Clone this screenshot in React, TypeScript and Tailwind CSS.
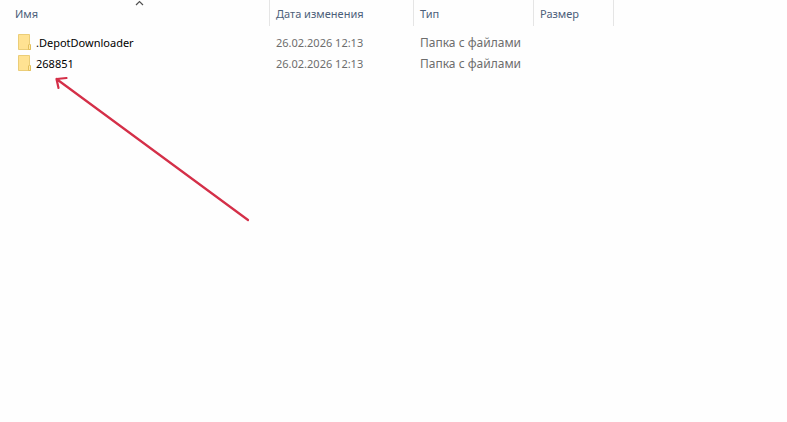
import { useState } from 'react'

interface FileEntry {
  name: string
  modified: string
  type: string
  size: string
}

const files: FileEntry[] = [
  { name: '.DepotDownloader', modified: '26.02.2026 12:13', type: 'Папка с файлами', size: '' },
  { name: '268851', modified: '26.02.2026 12:13', type: 'Папка с файлами', size: '' },
]

function FolderIcon() {
  return (
    <svg width="14" height="17" viewBox="0 0 14 17" className="shrink-0" aria-hidden="true">
      <path d="M0.5 0.5H11.5V10L12.5 11V15.5H0.5Z" fill="#ffe292" stroke="#ebcd78" />
      <path d="M10.5 15.5V11L11.5 10L12.5 11V15.5Z" fill="#ffe9a6" stroke="#e3bf5c" />
    </svg>
  )
}

function SortIcon({ ascending }: { ascending: boolean }) {
  return (
    <svg
      width="9"
      height="6"
      viewBox="0 0 9 6"
      className={`absolute top-0 left-1/2 ${ascending ? '' : 'rotate-180'}`}
      aria-hidden="true"
    >
      <path d="M1 5L4.5 1.5L8 5" fill="none" stroke="#505050" strokeWidth="1.2" />
    </svg>
  )
}

function PointerArrow() {
  return (
    <svg
      width="200"
      height="150"
      viewBox="0 0 200 150"
      className="absolute left-[52px] top-[74px] pointer-events-none"
      aria-hidden="true"
    >
      <path
        d="M196 146L4.5 5M14.5 4L4.5 5L6.5 14"
        fill="none"
        stroke="#d42f48"
        strokeWidth="2.2"
        strokeLinecap="round"
        strokeLinejoin="round"
      />
    </svg>
  )
}

const headerCell = 'h-[26px] p-0 pl-1.5 pt-0.5 text-left font-normal border-r border-[#e5e5e5]'

export default function App() {
  const [ascending, setAscending] = useState(true)
  const sorted = ascending ? files : [...files].reverse()

  return (
    <main className="relative min-h-screen bg-[#fefefe] font-['Noto_Sans','Open_Sans',sans-serif] text-[11px]">
      <table className="w-full table-fixed border-separate border-spacing-0">
        <colgroup>
          <col className="w-[270px]" />
          <col className="w-36" />
          <col className="w-[120px]" />
          <col className="w-20" />
          <col />
        </colgroup>
        <thead className="text-[#4c607a]">
          <tr>
            <th className="relative h-[26px] p-0 pt-0.5 text-left font-normal border-r border-[#e5e5e5]">
              <button
                type="button"
                onClick={() => setAscending(!ascending)}
                className="w-full pl-[15px] text-left"
              >
                Имя
                <SortIcon ascending={ascending} />
              </button>
            </th>
            <th className={headerCell}>Дата изменения</th>
            <th className={headerCell}>Тип</th>
            <th className={headerCell}>Размер</th>
            <td />
          </tr>
        </thead>
        <tbody className="text-[#6d6d6d] before:block before:h-1.5">
          {sorted.map(file => (
            <tr key={file.name}>
              <td className="h-[21px] p-0 pl-[18px] text-black">
                <div className="flex items-center gap-1">
                  <FolderIcon />
                  <span className="pt-px">{file.name}</span>
                </div>
              </td>
              <td className="p-0 pl-1.5 pt-px">{file.modified}</td>
              <td className="p-0 pl-1.5 pt-px text-xs">{file.type}</td>
              <td className="p-0 pl-1.5 pt-px">{file.size}</td>
              <td />
            </tr>
          ))}
        </tbody>
      </table>
      <PointerArrow />
    </main>
  )
}
